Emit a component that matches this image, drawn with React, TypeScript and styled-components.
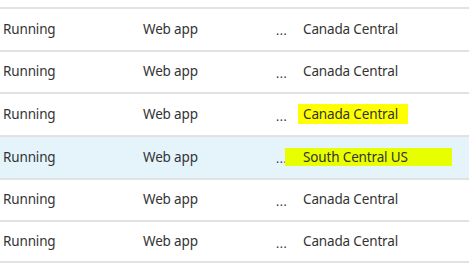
import styled, { createGlobalStyle, css } from 'styled-components'

type Resource = {
  status: string
  kind: string
  region: string
  selected?: boolean
  mark?: 'yellow' | 'lime'
}

const resources: Resource[] = [
  { status: 'Running', kind: 'Web app', region: 'Canada Central' },
  { status: 'Running', kind: 'Web app', region: 'Canada Central' },
  { status: 'Running', kind: 'Web app', region: 'Canada Central', mark: 'yellow' },
  { status: 'Running', kind: 'Web app', region: 'South Central US', selected: true, mark: 'lime' },
  { status: 'Running', kind: 'Web app', region: 'Canada Central' },
  { status: 'Running', kind: 'Web app', region: 'Canada Central' },
]

export default function App() {
  return (
    <>
      <GlobalStyle />
      <List>
        {resources.map((r, i) => (
          <Row key={i} selected={!!r.selected}>
            <Cell>{r.status}</Cell>
            <Cell>{r.kind}</Cell>
            <Ellipsis>...</Ellipsis>
            <Cell>{r.mark ? <Mark tone={r.mark}>{r.region}</Mark> : r.region}</Cell>
          </Row>
        ))}
      </List>
    </>
  )
}

const GlobalStyle = createGlobalStyle`
  html, body {
    margin: 0;
    padding: 0;
    background: #ffffff;
  }
  body {
    font-family: "Noto Sans", "Open Sans", sans-serif;
    color: #333333;
  }
`

const List = styled.div`
  padding-top: 7px;
  width: 469px;
  height: 273px;
  box-sizing: border-box;
  overflow: hidden;
`

const Row = styled.div<{ selected: boolean }>(
  ({ selected }) => css`
    display: grid;
    grid-template-columns: 140px 133px 27px 1fr;
    align-items: center;
    box-sizing: border-box;
    height: 42.67px;
    padding-left: 3px;
    border-top: 2px solid #e2e2e2;
    background: ${selected ? '#e5f4fb' : '#ffffff'};
    font-size: 13.5px;
    letter-spacing: -0.15px;
    &:last-child {
      border-bottom: 2px solid #e2e2e2;
    }
  `,
)

const Cell = styled.div`
  white-space: nowrap;
  line-height: 19px;
`

const Ellipsis = styled(Cell)`
  font-size: 12px;
  letter-spacing: 0.5px;
  padding-top: 3px;
`

const Mark = styled.span<{ tone: 'yellow' | 'lime' }>(
  ({ tone }) =>
    tone === 'yellow'
      ? css`
          background: #ffff00;
          padding: 1px 10px 1px 5px;
          margin-left: -5px;
        `
      : css`
          background: #e8ff00;
          padding: 0 44px 0 18px;
          margin-left: -18px;
        `,
)
